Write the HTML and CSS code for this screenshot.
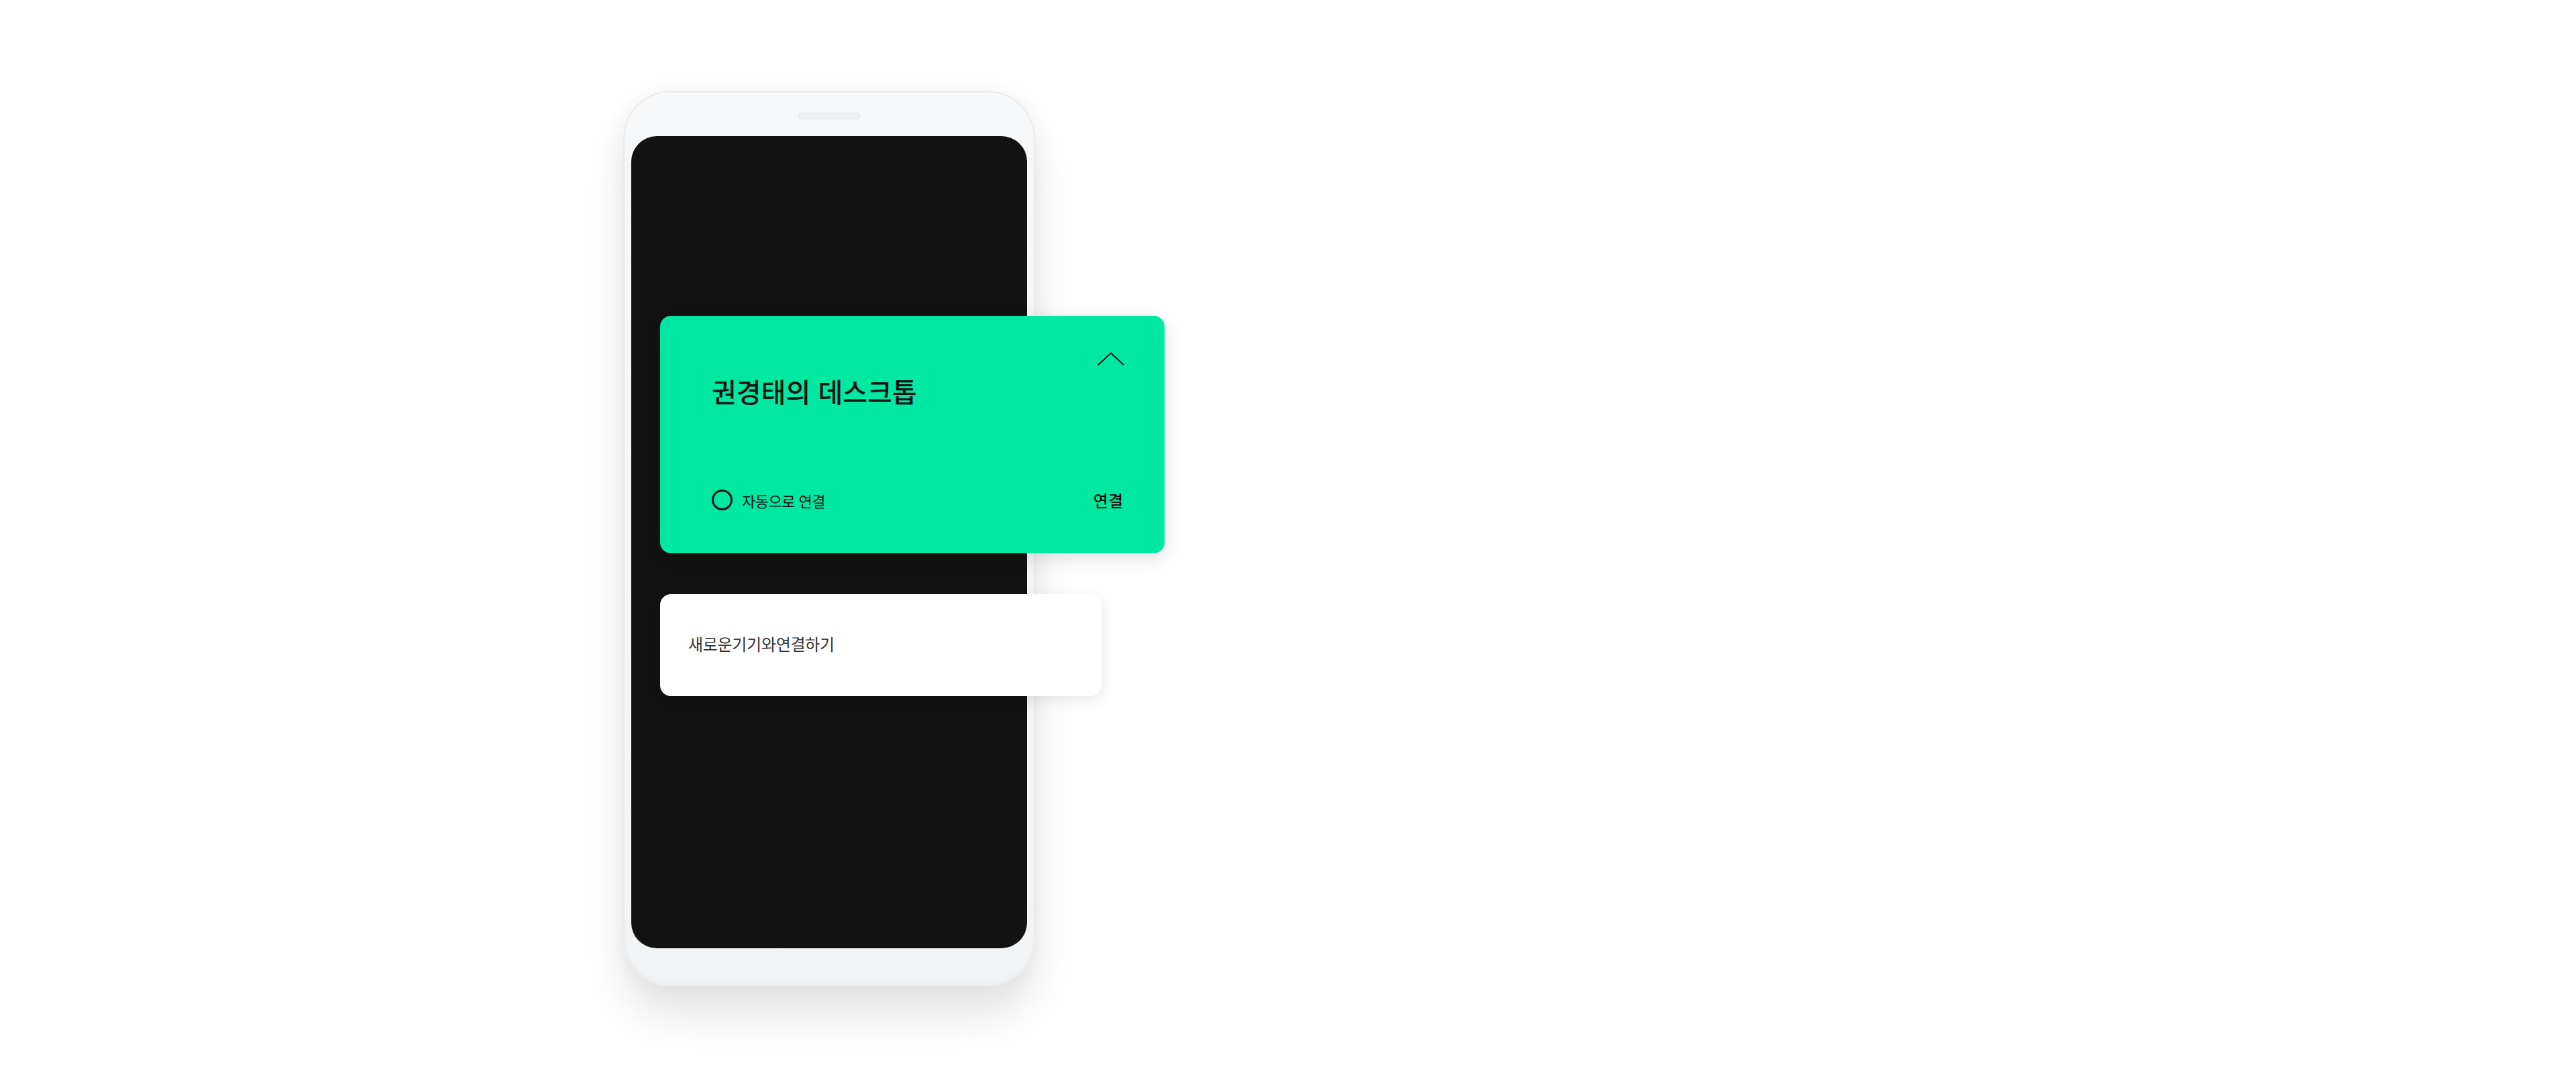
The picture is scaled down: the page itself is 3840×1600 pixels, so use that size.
FILE: index.html
```html
<!doctype html>
<html lang="ko">
  <head>
    <meta charset="utf-8" />
    <meta name="viewport" content="width=device-width" />
    <title>기기 연결</title>
    <link rel="stylesheet" href="styles.css">
  </head>

  <body>
    <main class="stage">
      <div class="phone">
        <div class="speaker"></div>
        <section class="screen">
          <article class="device-card">
            <div class="device-head">
              <h1 class="device-name">권경태의 데스크톱</h1>
              <svg class="chevron" width="40" height="20" viewBox="0 0 40 20">
                <polyline points="1,19 20,1.5 39,19" />
              </svg>
            </div>
            <div class="device-foot">
              <label class="auto">
                <span class="radio"></span>
                자동으로 연결
              </label>
              <span class="connect">연결</span>
            </div>
          </article>

          <article class="new-card">
            <p>새로운기기와연결하기</p>
          </article>
        </section>
      </div>
    </main>
  </body>
</html>
```

FILE: styles.css
```css
body {
  margin: 0;
  background: #fff;
  font-family: "Noto Sans CJK KR", "Noto Sans", sans-serif;
  color: #111;
}

.stage {
  min-height: 1600px;
  box-sizing: border-box;
  padding: 136px 0 0 929px;
}

/* phone body */
.phone {
  width: 614px;
  height: 1335px;
  box-sizing: border-box;
  padding: 32px 12px 57px 12px;
  border-radius: 70px;
  background: linear-gradient(#f6f7f8, #f1f3f4);
  box-shadow:
    inset 0 0 0 2px #e8eaec,
    inset 0 3px 4px rgba(255, 255, 255, 0.9),
    inset 0 -4px 10px rgba(0, 0, 0, 0.03),
    0 45px 60px rgba(0, 0, 0, 0.1),
    0 0 36px rgba(0, 0, 0, 0.05);
}

.speaker {
  width: 92px;
  height: 10px;
  margin: 0 auto 25px;
  border-radius: 5px;
  background: #eef0f1;
  box-shadow: inset 0 0 0 1px #e2e4e6;
}

.screen {
  height: 1211px;
  box-sizing: border-box;
  padding: 268px 0 0 43px;
  border-radius: 38px;
  background: #121212;
}

/* cards */
.device-card {
  width: 752px;
  height: 354px;
  box-sizing: border-box;
  padding: 54px 60px 62px 77px;
  display: flex;
  flex-direction: column;
  justify-content: space-between;
  border-radius: 16px;
  background: #00e8a2;
  box-shadow: 0 8px 30px rgba(0, 0, 0, 0.12);
}

.device-head {
  display: flex;
  justify-content: space-between;
  align-items: flex-start;
}

.device-name {
  margin: 34px 0 0;
  font-size: 40px;
  font-weight: 500;
  line-height: 48px;
  letter-spacing: 0;
}

.chevron {
  display: block;
  fill: none;
  stroke: #111;
  stroke-width: 2;
}

.device-foot {
  display: flex;
  justify-content: space-between;
  align-items: center;
}

.auto {
  display: flex;
  align-items: center;
  gap: 14px;
  font-size: 22px;
  letter-spacing: -0.5px;
}

.radio {
  width: 31px;
  height: 31px;
  box-sizing: border-box;
  border: 3px solid #111;
  border-radius: 50%;
}

.connect {
  margin-right: 2px;
  font-size: 24px;
  font-weight: 500;
}

.new-card {
  width: 658px;
  height: 152px;
  box-sizing: border-box;
  margin-top: 61px;
  padding: 0 42px 6px;
  display: flex;
  align-items: center;
  border-radius: 16px;
  background: #fff;
  box-shadow: 0 6px 22px rgba(0, 0, 0, 0.1);
}

.new-card p {
  margin: 0;
  font-size: 24px;
  letter-spacing: -0.3px;
  color: #333;
}
```
